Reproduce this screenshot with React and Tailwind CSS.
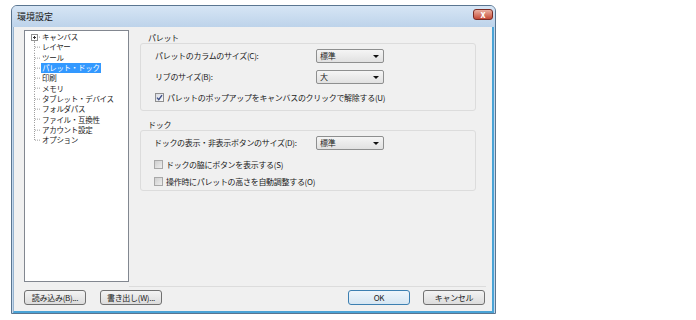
import React from "react";

const TREE_ITEMS = [
  "キャンバス",
  "レイヤー",
  "ツール",
  "パレット・ドック",
  "印刷",
  "メモリ",
  "タブレット・デバイス",
  "フォルダパス",
  "ファイル・互換性",
  "アカウント設定",
  "オプション",
];

const SELECTED = "パレット・ドック";

function TreeLines({ first, last }) {
  return (
    <svg className="h-full w-[16px] shrink-0 overflow-visible" width="16">
      <g stroke="#a0a0a0" strokeWidth="1" strokeDasharray="1 1" fill="none">
        {!first && <line x1="9.5" y1="0" x2="9.5" y2={last ? "50%" : "100%"} />}
        {first && <line x1="9.5" y1="50%" x2="9.5" y2="100%" />}
        <line x1="10" y1="50%" x2="16" y2="50%" />
      </g>
      {first && (
        <g>
          <rect x="6.5" y="2.5" width="6" height="6" fill="#fff" stroke="#919191" />
          <line x1="8" y1="5.5" x2="11" y2="5.5" stroke="#333" />
          <line x1="9.5" y1="4" x2="9.5" y2="7" stroke="#333" />
        </g>
      )}
    </svg>
  );
}

function Combo({ value }) {
  return (
    <div className="flex h-[14px] w-[68px] items-center justify-between rounded-[2px] border border-[#8e8f8f] bg-linear-to-b from-[#f5f5f5] to-[#e1e1e1] pl-[3px] pr-[4px]">
      <span>{value}</span>
      <span className="h-0 w-0 border-x-[3px] border-t-[3px] border-x-transparent border-t-[#111]" />
    </div>
  );
}

function Check({ checked, children }) {
  return (
    <div className="flex h-[9px] items-center">
      <div
        className={
          checked
            ? "flex h-[9px] w-[9px] items-center justify-center border border-[#8f8f8f] bg-linear-to-br from-[#d9dce4] to-[#f8f9fb]"
            : "h-[9px] w-[9px] border border-[#a8a8a8] bg-linear-to-br from-[#cfcfcf] to-[#eeeeee]"
        }
      >
        {checked && (
          <svg width="7" height="7" viewBox="0 0 7 7">
            <path d="M1 3.6 L2.8 5.6 L6 1.2" stroke="#3d4f86" strokeWidth="1.4" fill="none" />
          </svg>
        )}
      </div>
      <span className="ml-[3px]">{children}</span>
    </div>
  );
}

function Button({ children, primary }) {
  return (
    <div
      className={
        primary
          ? "flex h-[15px] w-[62px] items-center justify-center rounded-[3px] border border-[#3c7fb1] bg-linear-to-b from-[#eef5fb] to-[#d6e6f2]"
          : "flex h-[15px] w-[62px] items-center justify-center rounded-[3px] border border-[#707070] bg-linear-to-b from-[#f3f3f3] to-[#dcdcdc]"
      }
    >
      {children}
    </div>
  );
}

export default function App() {
  return (
    <div className="h-[320px] w-[696px] bg-white pl-[11px] pt-[5px] font-['Noto_Sans_CJK_JP',sans-serif] text-[8px] leading-[10px] tracking-[-0.3px] text-[#1a1a1a]">
      <div className="flex h-[309px] w-[485px] flex-col rounded-t-[6px] border border-[#5a7590] bg-[#c4d9ee]">
        <div className="flex h-[21px] shrink-0 items-start justify-between rounded-t-[5px] bg-linear-to-b from-[#d6e5f5] to-[#bdd3ea] pl-[5px] pr-[2px]">
          <span className="mt-[6px] text-[9px] leading-[10px] tracking-normal">環境設定</span>
          <div className="mt-[3px] flex h-[11px] w-[20px] items-center justify-center rounded-[3px] border border-[#7a2b24] bg-linear-to-b from-[#eab0a2] to-[#c44836] text-[9px] font-bold leading-none text-white">
            x
          </div>
        </div>

        <div className="ml-px mr-px flex flex-1 flex-col border-b-2 border-l border-r-2 border-b-[#4aa3d6] border-l-[#98b4cf] border-r-[#4aa3d6] bg-[#f0f0f0]">
          <div className="flex pl-[10px] pt-[3px]">
            <div className="h-[252px] w-[105px] shrink-0 border border-[#828790] bg-white pt-px text-[7.5px]">
              {TREE_ITEMS.map((item, i) => (
                <div key={item} className="flex h-[10.3px] items-center">
                  <TreeLines first={i === 0} last={i === TREE_ITEMS.length - 1} />
                  <span
                    className={
                      item === SELECTED
                        ? "bg-[#3399ff] px-px text-white"
                        : "px-px"
                    }
                  >
                    {item}
                  </span>
                </div>
              ))}
            </div>

            <div className="ml-[11px] flex w-[336px] flex-col">
              <div className="mt-[3px] h-[10px] pl-[8px]">パレット</div>
              <div className="h-[68px] rounded-[3px] border border-[#dcdcdc] pl-[14px] pt-[5px]">
                <div className="flex h-[14px] items-center">
                  <span className="w-[161px]">パレットのカラムのサイズ(C):</span>
                  <Combo value="標準" />
                </div>
                <div className="mt-[7px] flex h-[14px] items-center">
                  <span className="w-[161px]">リブのサイズ(B):</span>
                  <Combo value="大" />
                </div>
                <div className="mt-[9px]">
                  <Check checked>パレットのポップアップをキャンバスのクリックで解除する(U)</Check>
                </div>
              </div>

              <div className="mt-[9px] h-[10px] pl-[8px]">ドック</div>
              <div className="h-[61px] rounded-[3px] border border-[#dcdcdc] pl-[13px] pt-[5px]">
                <div className="flex h-[14px] items-center">
                  <span className="w-[162px]">ドックの表示・非表示ボタンのサイズ(D):</span>
                  <Combo value="標準" />
                </div>
                <div className="mt-[10px]">
                  <Check>ドックの脇にボタンを表示する(S)</Check>
                </div>
                <div className="mt-[8px]">
                  <Check>操作時にパレットの高さを自動調整する(O)</Check>
                </div>
              </div>
            </div>
          </div>

          <div className="ml-[115px] mt-[4px] h-px w-[357px] bg-[#dcdcdc]" />

          <div className="mt-[3px] flex pl-[10px]">
            <Button>読み込み(B)...</Button>
            <div className="ml-[14px]">
              <Button>書き出し(W)...</Button>
            </div>
            <div className="ml-[186px]">
              <Button primary>OK</Button>
            </div>
            <div className="ml-[13px]">
              <Button>キャンセル</Button>
            </div>
          </div>
        </div>
      </div>
    </div>
  );
}
